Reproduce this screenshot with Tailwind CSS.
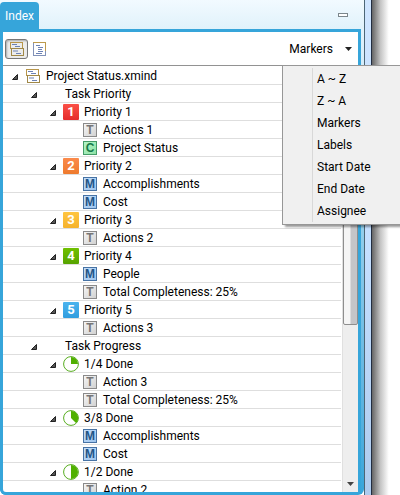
<!DOCTYPE html>
<html lang="en">
<head>
<meta charset="utf-8">
<title>Index</title>
<script src="https://cdn.jsdelivr.net/npm/@tailwindcss/browser@4"></script>
</head>
<body class="bg-white text-xs text-black font-['Roboto','Open_Sans',sans-serif]">
<svg class="hidden">
  <defs>
    <linearGradient id="paper" x1="0" y1="0" x2="1" y2="1"><stop offset="0" stop-color="#fff"/><stop offset="1" stop-color="#c3d0ee"/></linearGradient>
    <linearGradient id="pie" x1="0" y1="0" x2="0" y2="1"><stop offset="0" stop-color="#fff"/><stop offset="1" stop-color="#dcdcdc"/></linearGradient>
    <symbol id="sheets" viewBox="0 0 14 14">
      <rect x="0.5" y="0.5" width="12" height="6" fill="url(#paper)" stroke="#b8964a"/>
      <path d="M2 2.500h5M5 4.500h5" stroke="#6d82b5"/>
      <rect x="1.500" y="6.500" width="12" height="7" fill="url(#paper)" stroke="#a08848"/>
      <path d="M3 9h5M6 11.500h5" stroke="#6d82b5"/>
    </symbol>
    <symbol id="outline" viewBox="0 0 14 14">
      <rect x="0.5" y="0.5" width="12" height="13" fill="url(#paper)" stroke="#8292b8"/>
      <path d="M0 .5h13M12.500 0v9" stroke="#bd9a4c"/>
      <path d="M3 3.500h4M5 5.500h5M5 7.500h4M5 9.500h5M3 11.500h6" stroke="#6d82b5"/>
    </symbol>
  </defs>
</svg>
<main class="flex h-screen overflow-hidden">
  <section class="flex min-w-0 flex-1 flex-col rounded-b-md bg-gradient-to-b from-[#eef8fe] via-[#8ccbea] via-50% to-[#36a5da]">
    <header class="flex h-[29px] shrink-0 items-end justify-between bg-gradient-to-b from-[#f2faff] to-[#e0f2fb]">
      <button class="h-[27px] w-[39px] rounded-t-sm bg-[#36a5da] text-center text-white">Index</button>
      <button aria-label="Minimize" class="mr-4 mb-3 h-1 w-[10px] border border-[#7c878c] bg-white"></button>
    </header>
    <div class="mr-[3px] flex min-h-0 flex-1 flex-col rounded-b-md border-3 border-[#36a5da] bg-white">
      <div class="flex h-[34px] shrink-0 items-center border-b border-[#929292] pr-1.5 pl-0.5">
        <button aria-label="Group by sheet" class="flex h-5 w-[23px] items-center justify-center rounded-[3px] border border-[#777] bg-[#ececec] shadow-[inset_1px_1px_2px_#aaa]"><svg class="size-[14px]"><use href="#sheets"/></svg></button>
        <button aria-label="Outline" class="ml-[5px]"><svg class="size-[14px]"><use href="#outline"/></svg></button>
        <button aria-haspopup="menu" aria-expanded="true" class="ml-auto flex items-center gap-3">Markers
          <svg class="h-1 w-[7px]" viewBox="0 0 7 4"><path d="M0 0h7L3.500 4z" fill="#222"/></svg></button>
      </div>
      <div class="flex min-h-0 flex-1 pt-px">
        <ul id="tree" role="tree" class="min-w-0 flex-1 overflow-hidden"></ul>
        <div aria-hidden="true" class="ml-px flex w-4 shrink-0 flex-col items-center border-l border-[#e0e0e0] bg-[#eee]">
          <div class="h-[258px] w-full rounded-b-xs border border-[#8e8e8e] bg-gradient-to-r from-[#f5f5f5] from-45% to-[#c5c5c8] to-55%"></div>
          <svg class="mt-auto mb-1.5 h-1 w-[7px]" viewBox="0 0 7 4"><path d="M0 0h7L3.500 4z" fill="#444"/></svg>
        </div>
      </div>
    </div>
  </section>
  <div class="w-[8px] shrink-0 border-x border-[#4c6676] border-r-[#222d40] bg-gradient-to-b from-[#cfe5ff] via-[#c4dfff] to-[#aecbee]"></div>
  <div class="w-[28px] shrink-0 bg-gradient-to-r from-[#666] via-[#c4c4c4] via-30% to-white to-60%"></div>
</main>
<ul role="menu" class="absolute top-[65px] right-0 w-[118px] border border-r-0 border-[#979797] bg-[#f0f0f0] pt-0.5 pb-0.5 shadow-[3px_2px_2px_#0006]">
  <li><button role="menuitem" class="ml-[29px] block h-[22px] border-l border-[#d8d8d8] pl-1">A ~ Z</button></li>
  <li><button role="menuitem" class="ml-[29px] block h-[22px] border-l border-[#d8d8d8] pl-1">Z ~ A</button></li>
  <li><button role="menuitem" class="ml-[29px] block h-[22px] border-l border-[#d8d8d8] pl-1">Markers</button></li>
  <li><button role="menuitem" class="ml-[29px] block h-[22px] border-l border-[#d8d8d8] pl-1">Labels</button></li>
  <li><button role="menuitem" class="ml-[29px] block h-[22px] border-l border-[#d8d8d8] pl-1">Start Date</button></li>
  <li><button role="menuitem" class="ml-[29px] block h-[22px] border-l border-[#d8d8d8] pl-1">End Date</button></li>
  <li><button role="menuitem" class="ml-[29px] block h-[22px] border-l border-[#d8d8d8] pl-1">Assignee</button></li>
</ul>
<script>
// [depth, marker, label]
const rows = [
  [0, 'sheet', 'Project Status.xmind'],
  [1, '', 'Task Priority'],
  [2, '1', 'Priority 1'], [3, 'T', 'Actions 1'], [3, 'C', 'Project Status'],
  [2, '2', 'Priority 2'], [3, 'M', 'Accomplishments'], [3, 'M', 'Cost'],
  [2, '3', 'Priority 3'], [3, 'T', 'Actions 2'],
  [2, '4', 'Priority 4'], [3, 'M', 'People'], [3, 'T', 'Total Completeness: 25%'],
  [2, '5', 'Priority 5'], [3, 'T', 'Actions 3'],
  [1, '', 'Task Progress'],
  [2, 'quarter', '1/4 Done'], [3, 'T', 'Action 3'], [3, 'T', 'Total Completeness: 25%'],
  [2, 'threeEighths', '3/8 Done'], [3, 'M', 'Accomplishments'], [3, 'M', 'Cost'],
  [2, 'half', '1/2 Done'], [3, 'T', 'Action 2']
];
const pads = ['pl-[6px]', 'pl-[25px]', 'pl-[44px]', 'pl-[63px]'];
const tints = {
  1: 'from-[#fb4f46] to-[#e52b2b]', 2: 'from-[#fb8a4b] to-[#ee7a2c]', 3: 'from-[#ffc540] to-[#f5b22c]',
  4: 'from-[#70c000] to-[#56a300]', 5: 'from-[#4bb3ee] to-[#2f9ddf]'
};
const letters = {
  T: 'border-[#8a8a8a] from-[#f5f5f5] to-[#d2d2d2] text-[#777]',
  C: 'border-[#459b68] from-[#b4f5c8] to-[#8de2a5] text-[#167a4a]',
  M: 'border-[#4773a5] from-[#c4defa] to-[#9dc4ee] text-[#235587]'
};
const arcs = { quarter: 'M8 8V1A7 7 0 0 1 15 8z', threeEighths: 'M8 8V1A7 7 0 0 1 13 13z', half: 'M8 8V1A7 7 0 0 1 8 15z' };
function marker(m) {
  if (m === 'sheet') return '<svg class="size-[14px]"><use href="#sheets"/></svg>';
  if (tints[m]) return `<span class="flex size-4 items-center justify-center rounded-[1px] bg-gradient-to-b font-['Roboto',sans-serif] text-[13px] leading-none font-bold text-white ${tints[m]}">${m}</span>`;
  if (letters[m]) return `<span class="flex size-[14px] items-center justify-center border bg-gradient-to-br font-['Liberation_Sans',sans-serif] text-[12px] leading-none font-bold ${letters[m]}">${m}</span>`;
  if (arcs[m]) return `<svg class="size-4" viewBox="0 0 16 16"><circle cx="8" cy="8" r="7.400" fill="url(#pie)" stroke="#58ad20"/><path d="${arcs[m]}" fill="#50b000"/></svg>`;
  return '';
}
document.getElementById('tree').innerHTML = rows.map(([d, m, label]) => `
  <li role="treeitem" aria-level="${d + 1}" class="flex h-[18px] items-center gap-1 border-b border-[#dedede] whitespace-nowrap ${pads[d]}">
    ${d < 3 ? '<button aria-label="Collapse" class="flex w-3 justify-center pt-[3px]"><svg class="size-[6px]" viewBox="0 0 6 6"><path d="M5.500 .5v5h-5z" fill="#555" stroke="#222"/></svg></button>' : '<span class="w-3"></span>'}
    <span class="flex w-4 shrink-0 justify-center">${marker(m)}</span>
    <span class="pl-px">${label}</span>
  </li>`).join('');
</script>
</body>
</html>
